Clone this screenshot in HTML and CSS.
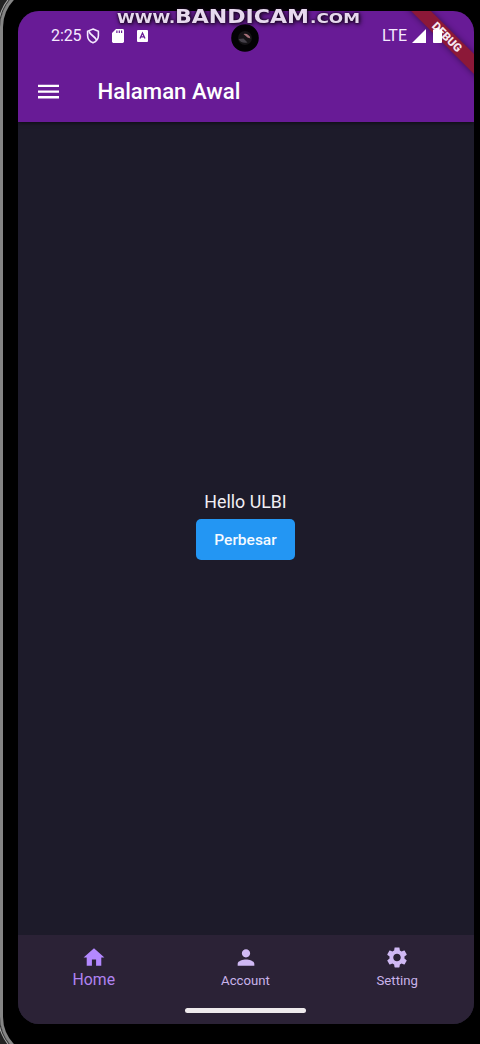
FILE: index.html
```html
<!DOCTYPE html>
<html lang="id">
<head>
<meta charset="utf-8">
<title>Halaman Awal</title>
<link rel="stylesheet" href="styles.css">
</head>
<body>
<div class="phone">
  <div class="bezel"></div>
  <main class="screen">
    <header class="top">
      <div class="status">
        <span class="time">2:25</span>
        <svg class="shield" width="14" height="16" viewBox="0 0 14 16" fill="none" stroke="#f5eaff" stroke-width="1.6"><path d="M7 1.1 12.4 3.2V7.5C12.4 11 10.2 13.6 7 14.8 3.8 13.6 1.6 11 1.6 7.5V3.2Z"/><path d="M3 3.2C4 7 8.5 8 10.6 12" stroke-width="1.8"/></svg>
        <svg class="sd" width="12" height="14" viewBox="0 0 12 14"><path fill="#fff" d="M4 0H10.6Q12 0 12 1.4V12.6Q12 14 10.6 14H1.4Q0 14 0 12.6V4Z"/><path fill="#681b96" d="M4.3 1.5h1.2v2.6H4.3zM6.7 1.5h1.2v2.6H6.7zM9 1.5h1.2v2.6H9z"/></svg>
        <svg class="abox" width="11" height="12" viewBox="0 0 11 12"><rect width="11" height="12" rx="1" fill="#fff"/><path d="M3 8.5 5.5 3 8 8.5M4 6.8H7" fill="none" stroke="#681b96" stroke-width="1.3"/></svg>
        <span class="net">LTE</span>
        <svg class="signal" width="14" height="14" viewBox="0 0 14 14"><path fill="#fff" d="M14 0V14H0Z"/></svg>
        <svg class="battery" width="9" height="15" viewBox="0 0 9 15"><path fill="#fff" d="M2.5 0h4v1.5H8.2Q9 1.5 9 2.3V14.2Q9 15 8.2 15H.8Q0 15 0 14.2V2.3Q0 1.5.8 1.5H2.5Z"/></svg>
      </div>
      <div class="appbar">
        <svg width="21" height="15" viewBox="0 0 21 15"><path fill="#fff" d="M0 .8h21v2.3H0zM0 6.5h21v2.3H0zM0 12.1h21v2.3H0z"/></svg>
        <h1 class="title">Halaman Awal</h1>
      </div>
      <div class="debug">DEBUG</div>
    </header>
    <section class="content">
      <p class="hello">Hello ULBI</p>
      <button class="enlarge">Perbesar</button>
    </section>
    <footer class="bottom">
      <nav class="tabs">
        <a class="tab active"><svg width="26" height="26" viewBox="0 0 24 24"><path d="M10 20v-6h4v6h5v-8h3L12 3 2 12h3v8z"/></svg><span>Home</span></a>
        <a class="tab"><svg width="26" height="26" viewBox="0 0 24 24"><path d="M12 12c2.21 0 4-1.79 4-4s-1.79-4-4-4-4 1.79-4 4 1.79 4 4 4zm0 2c-2.67 0-8 1.34-8 4v2h16v-2c0-2.66-5.33-4-8-4z"/></svg><span>Account</span></a>
        <a class="tab"><svg width="26" height="26" viewBox="0 0 24 24"><path d="M19.14 12.94c.04-.3.06-.61.06-.94 0-.32-.02-.64-.07-.94l2.03-1.58c.18-.14.23-.41.12-.61l-1.92-3.32c-.12-.22-.37-.29-.59-.22l-2.39.96c-.5-.38-1.03-.7-1.62-.94l-.36-2.54c-.04-.24-.24-.41-.48-.41h-3.84c-.24 0-.43.17-.47.41l-.36 2.54c-.59.24-1.13.57-1.62.94l-2.39-.96c-.22-.08-.47 0-.59.22L2.74 8.87c-.12.21-.08.47.12.61l2.03 1.58c-.05.3-.09.63-.09.94s.02.64.07.94l-2.03 1.58c-.18.14-.23.41-.12.61l1.92 3.32c.12.22.37.29.59.22l2.39-.96c.5.38 1.03.7 1.62.94l.36 2.54c.05.24.24.41.48.41h3.84c.24 0 .44-.17.47-.41l.36-2.54c.59-.24 1.13-.56 1.62-.94l2.39.96c.22.08.47 0 .59-.22l1.92-3.32c.12-.22.07-.47-.12-.61l-2.01-1.58zM12 15.6c-1.98 0-3.6-1.62-3.6-3.6s1.62-3.6 3.6-3.6 3.6 1.62 3.6 3.6-1.62 3.6-3.6 3.6z"/></svg><span>Setting</span></a>
      </nav>
      <div class="handle"></div>
    </footer>
  </main>
  <svg class="camera" width="28" height="28" viewBox="0 0 28 28"><circle cx="14" cy="14" r="13.8" fill="#030204"/><circle cx="14" cy="14" r="7" fill="#151316"/><path d="M7.5 15q3 5 9 3.5l-4-4z" fill="#454149"/><path d="M12.5 10q5-1 7 4.5l-3-1z" fill="#a57078"/></svg>
  <svg class="watermark" width="256" height="32" viewBox="0 0 256 32">
    <text x="7" y="23" font-size="14" textLength="58" lengthAdjust="spacingAndGlyphs">WWW.</text>
    <text x="65" y="23" font-size="19" textLength="134" lengthAdjust="spacingAndGlyphs">BANDICAM</text>
    <text x="200" y="23" font-size="13.5" textLength="50" lengthAdjust="spacingAndGlyphs">.COM</text>
  </svg>
</div>
</body>
</html>
```
FILE: styles.css
```css
* { box-sizing: border-box; }
body { margin: 0; background: #000; font-family: Roboto, sans-serif; }
.phone { position: relative; width: 480px; height: 1044px; padding: 11px 6px 20px 18px; overflow: hidden; background: #000; }
.bezel { position: absolute; left: 0; top: -15px; width: 530px; height: 1074px; border: 3px solid #7c7c7c; border-left-color: #858585; border-radius: 42px; box-shadow: 0 0 0 1px #333, 0 0 0 2px #aaa, 0 0 0 8px #222; }
.screen { position: relative; isolation: isolate; display: flex; flex-direction: column; width: 456px; height: 1013px; border-radius: 21px; overflow: hidden; background: #1d1b2a; }
.top { position: relative; z-index: 1; height: 111px; background: #681b96; box-shadow: 0 1px 4px #0009; }
.status { position: relative; z-index: 3; display: flex; align-items: center; height: 49px; padding-left: 33px; color: #f5eaff; font-size: 16px; }
.time { width: 35px; letter-spacing: -0.1px; }
.shield { margin-top: 1px; }
.sd { margin-left: 12px; margin-top: 1px; }
.abox { margin-left: 13px; margin-top: 1px; }
.net { margin-left: auto; }
.signal { margin-left: 5px; }
.battery { margin-left: 7px; margin-right: 32px; }
.appbar { display: flex; align-items: center; height: 62px; padding-left: 20px; }
.title { margin: 0 0 0 38.5px; color: #fff; font-size: 22.2px; font-weight: 500; line-height: 28px; }
.content { flex: 1; display: flex; flex-direction: column; align-items: center; padding: 369px 1px 0 0; }
.hello { margin: 0; color: #f1eef4; font-size: 17.8px; line-height: 22px; }
.enlarge { margin-top: 6px; width: 99px; height: 41px; padding: 0; border: 0; border-radius: 5px; background: #2396f3; color: #f5faff; font: 500 15.5px Roboto, sans-serif; }
.bottom { height: 89px; padding-right: 1px; background: #2b2236; }
.tabs { display: flex; height: 73px; padding-top: 10px; }
.tab { flex: 1; display: flex; flex-direction: column; align-items: center; color: #c9b3ea; fill: #d0b9f4; font-size: 13.2px; line-height: 21px; }
.tab svg { height: 25px; }
.tab.active { color: #b083f2; fill: #b388ff; font-size: 15.8px; line-height: 19px; }
.handle { width: 121px; height: 5px; margin: 0 auto; border-radius: 3px; background: #eeeaec; }
.debug { position: absolute; z-index: 2; left: 369px; top: 19px; width: 120px; height: 14px; transform: rotate(45deg); background: #8c1838; box-shadow: 0 0 6px #0007; color: #f7e7ef; text-align: center; font-size: 11.5px; font-weight: 900; line-height: 14px; }
.camera { position: absolute; left: 231px; top: 24px; }
.watermark { position: absolute; left: 110px; top: 0; font-family: "DejaVu Sans", sans-serif; font-weight: 700; fill: #e7d9ee; filter: drop-shadow(0 0 1px #17051f) drop-shadow(1px 1px 2px #17051f); }
```
